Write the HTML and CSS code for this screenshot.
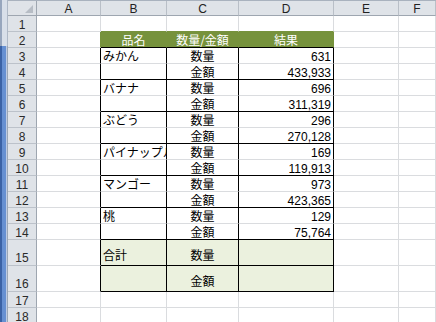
FILE: index.html
```html
<!DOCTYPE html>
<html>

	<head>
		<meta charset="utf-8">
		<title>集計表</title>
		<link rel="stylesheet" href="styles.css">
	</head>

	<body>
		<!-- 左端の枠 -->
		<div class="edge">
			<div class="edge-top"></div>
			<div class="edge-blue"></div>
		</div>

		<div class="book">
			<div class="topband"></div>

			<!-- シート本体 -->
			<div class="sheet">
				<!-- 列見出し -->
				<div class="corner"><span class="tri"></span></div>
				<div class="colhead">A</div>
				<div class="colhead">B</div>
				<div class="colhead">C</div>
				<div class="colhead">D</div>
				<div class="colhead">E</div>
				<div class="colhead">F</div>

				<!-- 1 -->
				<div class="rowhead">1</div>
				<div class="c"></div>
				<div class="c g-top"></div>
				<div class="c g-top"></div>
				<div class="c g-top"></div>
				<div class="c"></div>
				<div class="c"></div>

				<!-- 2 見出し -->
				<div class="rowhead">2</div>
				<div class="c g-right"></div>
				<div class="c th">品名</div>
				<div class="c th">数量/金額</div>
				<div class="c th">結果</div>
				<div class="c"></div>
				<div class="c"></div>

				<!-- 3 -->
				<div class="rowhead">3</div>
				<div class="c edge-r"></div>
				<div class="c t lt">みかん</div>
				<div class="c t ct">数量</div>
				<div class="c t rt num">631</div>
				<div class="c"></div>
				<div class="c"></div>

				<!-- 4 -->
				<div class="rowhead">4</div>
				<div class="c edge-r"></div>
				<div class="c t tb lt"></div>
				<div class="c t tb ct">金額</div>
				<div class="c t tb rt num">433,933</div>
				<div class="c"></div>
				<div class="c"></div>

				<!-- 5 -->
				<div class="rowhead">5</div>
				<div class="c edge-r"></div>
				<div class="c t lt">バナナ</div>
				<div class="c t ct">数量</div>
				<div class="c t rt num">696</div>
				<div class="c"></div>
				<div class="c"></div>

				<!-- 6 -->
				<div class="rowhead">6</div>
				<div class="c edge-r"></div>
				<div class="c t tb lt"></div>
				<div class="c t tb ct">金額</div>
				<div class="c t tb rt num">311,319</div>
				<div class="c"></div>
				<div class="c"></div>

				<!-- 7 -->
				<div class="rowhead">7</div>
				<div class="c edge-r"></div>
				<div class="c t lt">ぶどう</div>
				<div class="c t ct">数量</div>
				<div class="c t rt num">296</div>
				<div class="c"></div>
				<div class="c"></div>

				<!-- 8 -->
				<div class="rowhead">8</div>
				<div class="c edge-r"></div>
				<div class="c t tb lt"></div>
				<div class="c t tb ct">金額</div>
				<div class="c t tb rt num">270,128</div>
				<div class="c"></div>
				<div class="c"></div>

				<!-- 9 -->
				<div class="rowhead">9</div>
				<div class="c edge-r"></div>
				<div class="c t lt">パイナップル</div>
				<div class="c t ct">数量</div>
				<div class="c t rt num">169</div>
				<div class="c"></div>
				<div class="c"></div>

				<!-- 10 -->
				<div class="rowhead">10</div>
				<div class="c edge-r"></div>
				<div class="c t tb lt"></div>
				<div class="c t tb ct">金額</div>
				<div class="c t tb rt num">119,913</div>
				<div class="c"></div>
				<div class="c"></div>

				<!-- 11 -->
				<div class="rowhead">11</div>
				<div class="c edge-r"></div>
				<div class="c t lt">マンゴー</div>
				<div class="c t ct">数量</div>
				<div class="c t rt num">973</div>
				<div class="c"></div>
				<div class="c"></div>

				<!-- 12 -->
				<div class="rowhead">12</div>
				<div class="c edge-r"></div>
				<div class="c t tb lt"></div>
				<div class="c t tb ct">金額</div>
				<div class="c t tb rt num">423,365</div>
				<div class="c"></div>
				<div class="c"></div>

				<!-- 13 -->
				<div class="rowhead">13</div>
				<div class="c edge-r"></div>
				<div class="c t lt">桃</div>
				<div class="c t ct">数量</div>
				<div class="c t rt num">129</div>
				<div class="c"></div>
				<div class="c"></div>

				<!-- 14 -->
				<div class="rowhead">14</div>
				<div class="c edge-r"></div>
				<div class="c t tb lt"></div>
				<div class="c t tb ct">金額</div>
				<div class="c t tb rt num">75,764</div>
				<div class="c"></div>
				<div class="c"></div>

				<!-- 15 合計 -->
				<div class="rowhead tall">15</div>
				<div class="c edge-r"></div>
				<div class="c t tb sum lt">合計</div>
				<div class="c t tb sum ct">数量</div>
				<div class="c t tb sum rt"></div>
				<div class="c"></div>
				<div class="c"></div>

				<!-- 16 -->
				<div class="rowhead tall">16</div>
				<div class="c edge-r"></div>
				<div class="c t tb sum lt"></div>
				<div class="c t tb sum ct">金額</div>
				<div class="c t tb sum rt"></div>
				<div class="c"></div>
				<div class="c"></div>

				<!-- 17 -->
				<div class="rowhead">17</div>
				<div class="c"></div>
				<div class="c"></div>
				<div class="c"></div>
				<div class="c"></div>
				<div class="c"></div>
				<div class="c"></div>

				<!-- 18 -->
				<div class="rowhead">18</div>
				<div class="c"></div>
				<div class="c"></div>
				<div class="c"></div>
				<div class="c"></div>
				<div class="c"></div>
				<div class="c"></div>
			</div>
		</div>
	</body>

</html>
```

FILE: styles.css
```css
* {
	box-sizing: border-box;
}

body {
	margin: 0;
	width: 436px;
	height: 322px;
	overflow: hidden;
	background-color: #fff;
	display: flex;
	font-family: "Noto Sans CJK JP", sans-serif;
	font-size: 12px;
	color: #000;
}

/* 左端の枠 */
.edge {
	width: 8px;
	display: flex;
	flex-direction: column;
}

.edge-top {
	height: 46px;
	background: linear-gradient(to right, #97a6bd 0 2px, #d8dfe9 2px 7px, #aeb8c6 7px);
}

.edge-blue {
	flex: 1;
	background: linear-gradient(to right, #3a62a6 0 2px, #6690d2 2px 6px, #bccbe4 6px 7px, #9aa6b6 7px);
}

.book {
	flex: 1;
	display: flex;
	flex-direction: column;
}

.topband {
	height: 3px;
	background-color: #f4f6f9;
	border-bottom: 1px solid #a9b2be;
}

/* シート */
.sheet {
	display: grid;
	grid-template-columns: 29px 64px 66px 72px 95px 65px 1fr;
	grid-template-rows: 15px repeat(14, 16px) 26px 26px 16px 16px;
}

.corner,
.colhead,
.rowhead {
	background-color: #dfe3e8;
	color: #222;
	font-family: "Liberation Sans", sans-serif;
	display: flex;
}

.corner {
	position: relative;
	border-right: 1px solid #9ea6b0;
	border-bottom: 1px solid #9ea6b0;
}

/* 左上の三角 */
.tri {
	position: absolute;
	right: 3px;
	bottom: 2px;
	width: 0;
	height: 0;
	border-left: 8px solid transparent;
	border-bottom: 8px solid #b7bdc5;
}

.colhead {
	border-right: 1px solid #b9bfc7;
	border-bottom: 1px solid #9ea6b0;
	justify-content: center;
	align-items: flex-end;
	line-height: 12px;
}

.rowhead {
	border-right: 1px solid #9ea6b0;
	border-bottom: 1px solid #bcc2ca;
	justify-content: center;
	align-items: flex-end;
	line-height: 11px;
	color: #2a2a2a;
}

.rowhead.tall {
	padding-bottom: 1px;
}

/* セル */
.c {
	border-right: 1px solid #dadcdf;
	border-bottom: 1px solid #dadcdf;
	display: flex;
	align-items: flex-end;
	line-height: 14px;
	white-space: nowrap;
	overflow: hidden;
}

.g-top {
	border-bottom-color: #76923c;
}

.g-right {
	border-right-color: #76923c;
}

.edge-r {
	border-right-color: #000;
}

/* 見出し行 */
.th {
	background-color: #76923c;
	color: #fff;
	justify-content: center;
	border-right-color: #76923c;
	border-bottom-color: #000;
}

/* 表の罫線 */
.t {
	border-right-color: #000;
}

.tb {
	border-bottom-color: #000;
}

/* 合計行 */
.sum {
	background-color: #ebf1de;
	padding-bottom: 3px;
}

.lt {
	padding-left: 2px;
}

.ct {
	justify-content: center;
}

.rt {
	justify-content: flex-end;
	padding-right: 2px;
}

.num {
	font-family: "Liberation Sans", sans-serif;
	line-height: 11px;
}
```
